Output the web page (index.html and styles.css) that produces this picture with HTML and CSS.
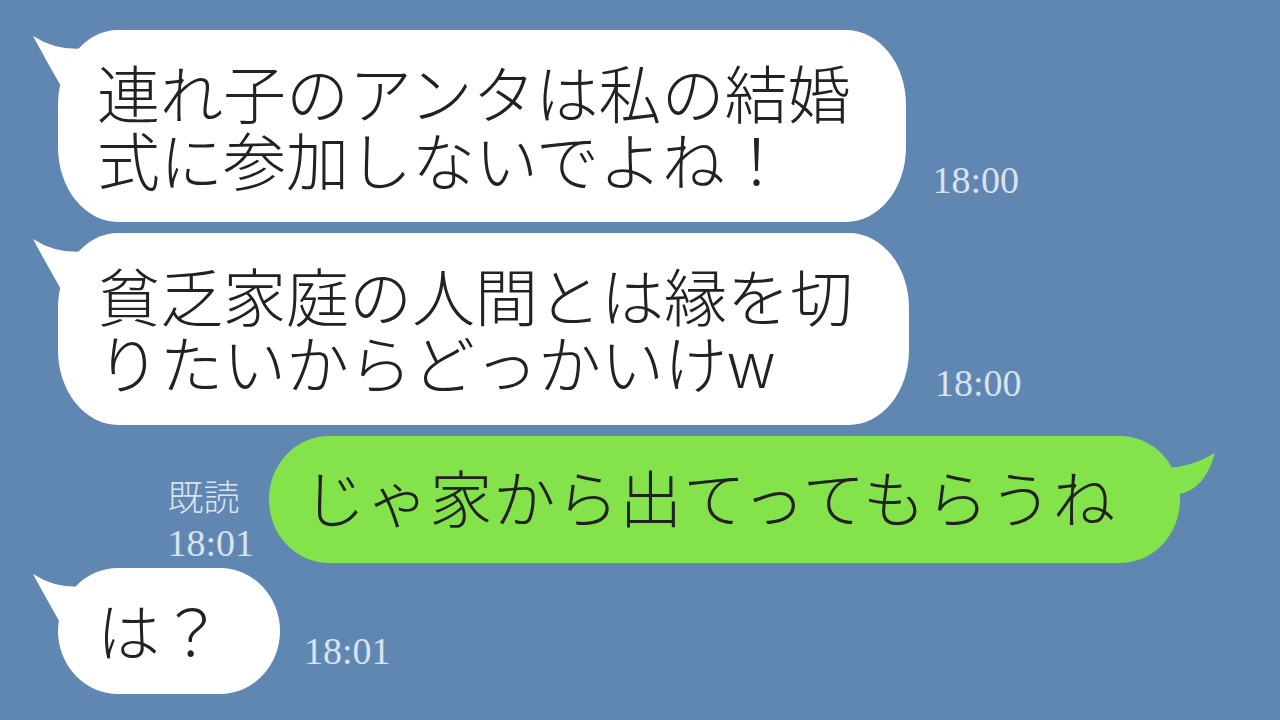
FILE: index.html
```html
<!DOCTYPE html>
<html lang="ja">
<head>
<meta charset="utf-8" />
<title>トーク</title>
<link rel="stylesheet" href="styles.css">
</head>
<body>
<div class="chat">
  <div class="row">
    <div class="bubble in tall">連れ子のアンタは私の結婚<br>式に参加しないでよね！<svg class="tail tail-in" viewBox="0 0 70 80" width="70" height="80"><path d="M5,6 Q30,22 60,18 L70,18 L70,80 L34,80 L34,58 Q19,32 5,6 Z"/></svg></div>
    <span class="time">18:00</span>
  </div>
  <div class="row">
    <div class="bubble in tall">貧乏家庭の人間とは縁を切<br>りたいからどっかいけw<svg class="tail tail-in" viewBox="0 0 70 80" width="70" height="80"><path d="M5,6 Q30,22 60,18 L70,18 L70,80 L34,80 L34,58 Q19,32 5,6 Z"/></svg></div>
    <span class="time">18:00</span>
  </div>
  <div class="row mine">
    <div class="read">
      <span class="read-label">既読</span>
      <span class="read-time">18:01</span>
    </div>
    <div class="bubble out">じゃ家から出てってもらうね<svg class="tail tail-out" viewBox="0 0 80 80" width="80" height="80"><path d="M75,17 Q50,32 25,32 L25,80 L38,80 L38,58 Q64,55 75,17 Z"/></svg></div>
  </div>
  <div class="row last">
    <div class="bubble in short">は？<svg class="tail tail-in" viewBox="0 0 70 80" width="70" height="80"><path d="M5,6 Q30,22 60,18 L70,18 L70,80 L34,80 L34,58 Q19,32 5,6 Z"/></svg></div>
    <span class="time time-short">18:01</span>
  </div>
</div>
</body>
</html>
```

FILE: styles.css
```css
body {
  margin:0; background:#6087b1;
  font-family:"Noto Sans CJK JP", sans-serif;
}
.chat {
  height:720px; box-sizing:border-box; padding:30px 100px 0 58px;
  display:flex; flex-direction:column;
}
.row {
  display:flex; align-items:flex-end;
}
.row + .row { margin-top:11px; }
.row.last { margin-top:5px; }
.row.mine { justify-content:flex-end; }

.bubble {
  position:relative; font-size:63px; line-height:67px; color:#222; white-space:nowrap;
  font-weight:300;
}
.bubble.in { background:#fff; }
.bubble.tall { border-radius:60px/75px; padding:27px 56px 31px 39px; }
.bubble.short { border-radius:60px/63px; padding:27px 57px 32px 39px; }
.bubble.out {
  background:#84e24b; border-radius:60px/63px; padding:26px 64px 34px 34px;
  font-size:62.5px; letter-spacing:0.8px;
}

.tail { position:absolute; top:0; }
.tail-in { left:-30px; fill:#fff; }
.tail-out { right:-40px; fill:#84e24b; }

.time, .read-time {
  font-family:"Liberation Serif", serif; font-size:38px; line-height:1; color:#d9e3ef;
}
.time { margin:0 0 23px 26px; }
.time.time-short { margin:0 0 24px 24px; }

.read {
  display:flex; flex-direction:column; align-items:flex-start; margin:0 15px 1px 0; color:#d9e3ef;
}
.read-label {
  font-size:36px; line-height:34px; margin-bottom:12px; font-weight:300;
}
```
